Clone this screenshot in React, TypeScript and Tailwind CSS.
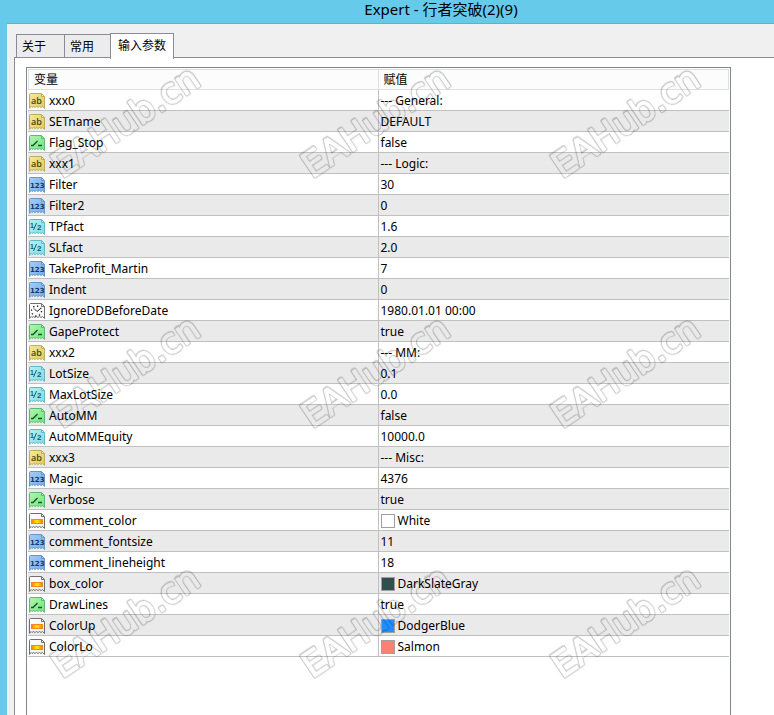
import { useState } from 'react';

type ParamType = 'string' | 'bool' | 'int' | 'double' | 'date' | 'color';

interface Param {
  name: string;
  type: ParamType;
  value: string;
  swatch?: string;
}

const params: Param[] = [
  { name: 'xxx0', type: 'string', value: '--- General:' },
  { name: 'SETname', type: 'string', value: 'DEFAULT' },
  { name: 'Flag_Stop', type: 'bool', value: 'false' },
  { name: 'xxx1', type: 'string', value: '--- Logic:' },
  { name: 'Filter', type: 'int', value: '30' },
  { name: 'Filter2', type: 'int', value: '0' },
  { name: 'TPfact', type: 'double', value: '1.6' },
  { name: 'SLfact', type: 'double', value: '2.0' },
  { name: 'TakeProfit_Martin', type: 'int', value: '7' },
  { name: 'Indent', type: 'int', value: '0' },
  { name: 'IgnoreDDBeforeDate', type: 'date', value: '1980.01.01 00:00' },
  { name: 'GapeProtect', type: 'bool', value: 'true' },
  { name: 'xxx2', type: 'string', value: '--- MM:' },
  { name: 'LotSize', type: 'double', value: '0.1' },
  { name: 'MaxLotSize', type: 'double', value: '0.0' },
  { name: 'AutoMM', type: 'bool', value: 'false' },
  { name: 'AutoMMEquity', type: 'double', value: '10000.0' },
  { name: 'xxx3', type: 'string', value: '--- Misc:' },
  { name: 'Magic', type: 'int', value: '4376' },
  { name: 'Verbose', type: 'bool', value: 'true' },
  { name: 'comment_color', type: 'color', value: 'White', swatch: 'bg-white' },
  { name: 'comment_fontsize', type: 'int', value: '11' },
  { name: 'comment_lineheight', type: 'int', value: '18' },
  { name: 'box_color', type: 'color', value: 'DarkSlateGray', swatch: 'bg-[#2f4f4f]' },
  { name: 'DrawLines', type: 'bool', value: 'true' },
  { name: 'ColorUp', type: 'color', value: 'DodgerBlue', swatch: 'bg-[#1e90ff]' },
  { name: 'ColorLo', type: 'color', value: 'Salmon', swatch: 'bg-[#fa8072]' },
];

const tabs = ['关于', '常用', '输入参数'];

const iconColors: Record<ParamType, { from: string; to: string; line: string; ink: string }> = {
  string: { from: '#f3ea9c', to: '#dccb62', line: '#bfae58', ink: '#4d4210' },
  bool: { from: '#b0f5b0', to: '#74e283', line: '#5cbc6e', ink: '#0f5a22' },
  int: { from: '#a4cdf5', to: '#72ace6', line: '#6496cf', ink: '#12386e' },
  double: { from: '#b5f2f4', to: '#7ddce6', line: '#62b8c6', ink: '#12606c' },
  date: { from: '#ffffff', to: '#f6f6f6', line: '#6f6f6f', ink: '#222222' },
  color: { from: '#ffffff', to: '#ececec', line: '#6f6f6f', ink: '#f08a1c' },
};

function TypeIcon({ type }: { type: ParamType }) {
  const c = iconColors[type];
  return (
    <svg width="16" height="16" viewBox="0 0 16 16" className="shrink-0" aria-hidden="true">
      <defs>
        <linearGradient id={`page-${type}`} x1="0" y1="0" x2="1" y2="1">
          <stop offset="0" stopColor={c.from} />
          <stop offset="1" stopColor={c.to} />
        </linearGradient>
        <linearGradient id="chip">
          <stop offset="0" stopColor="#ff7a00" />
          <stop offset="0.5" stopColor="#ffee00" />
          <stop offset="1" stopColor="#ff7a00" />
        </linearGradient>
      </defs>
      <path
        d="M.5 1.5Q.5.5 1.5.5H12L15.5 4V15.5L13.5 13.5L12 14.5L10.5 13.5L9 14.5L7.5 13.5L6 14.5L4.5 13.5L3 14.5L2 13.5L.5 15.5Z"
        fill={`url(#page-${type})`}
        stroke={c.line}
      />
      <path d="M12.5.5V3.5H15.5Z" fill={c.from} stroke={c.line} />
      {type === 'string' && (
        <text x="2" y="11" fontSize="9" fontWeight="600" fontFamily="Open Sans, sans-serif" fill={c.ink}>ab</text>
      )}
      {type === 'int' && (
        <text x="1" y="11" fontSize="7" fontWeight="bold" fontFamily="DejaVu Sans, sans-serif" fill={c.ink}>123</text>
      )}
      {type === 'double' && (
        <>
          <text x="1" y="9" fontSize="7" fontWeight="bold" fontFamily="Liberation Sans, sans-serif" fill={c.ink}>1</text>
          <path d="M4.5 11L7.5 4" stroke={c.ink} fill="none" />
          <text x="8" y="11" fontSize="8" fontWeight="bold" fontFamily="Liberation Sans, sans-serif" fill={c.ink}>2</text>
        </>
      )}
      {type === 'bool' && (
        <path d="M2 10.5H4L8.5 6M9 10.5H13" stroke={c.ink} strokeWidth="1.4" fill="none" />
      )}
      {type === 'date' && (
        <>
          <path d="M8 8.5L5 5.5M8 8.5L11 6" stroke={c.ink} fill="none" />
          <circle cx="7.5" cy="8" r="5" stroke={c.ink} strokeWidth="1.3" strokeDasharray="1.3 2.6" fill="none" />
        </>
      )}
      {type === 'color' && (
        <rect x="2.5" y="6.5" width="11" height="4" fill="url(#chip)" stroke={c.ink} />
      )}
    </svg>
  );
}

const markOrigins = [179, 429, 679].flatMap((y) => [62, 312, 562].map((x) => ({ x, y })));

function MarkText({ color, strokeWidth }: { color: string; strokeWidth: number }) {
  return markOrigins.map(({ x, y }) => (
    <text
      key={`${x}-${y}`}
      transform={`translate(${x} ${y}) rotate(-34)`}
      fontSize="35"
      fontFamily="DejaVu Sans, sans-serif"
      fill={color}
      stroke={color}
      strokeWidth={strokeWidth}
      strokeLinejoin="round"
    >
      EAHub.cn
    </text>
  ));
}

// Hollow letters: the text is drawn solid and its slightly thinner copy is cut out
function Watermark() {
  return (
    <svg className="absolute inset-0 h-full w-full pointer-events-none">
      <mask id="hollow" maskUnits="userSpaceOnUse" x="0" y="0" width="100%" height="100%">
        <rect width="100%" height="100%" fill="white" />
        <MarkText color="black" strokeWidth={1} />
      </mask>
      <g mask="url(#hollow)" opacity="0.25">
        <MarkText color="#202020" strokeWidth={3} />
      </g>
    </svg>
  );
}

export default function App() {
  const [active, setActive] = useState(2);

  return (
    <div className="relative flex min-h-screen flex-col overflow-hidden bg-[#66caea] font-['Noto_Sans','Noto_Sans_CJK_SC',sans-serif] text-xs text-black">
      <header className="h-[23px] pl-[108px] text-center">
        <h1 className="text-[15px] leading-[18px]">Expert - 行者突破(2)(9)</h1>
      </header>

      <main className="ml-[7px] flex grow flex-col border-t border-[#7ba7b8] bg-[#f0f0f0] pl-[7px] pt-[9px]">
        <div role="tablist" className="relative z-10 -mb-0.5 flex items-end pl-0.5">
          {tabs.map((tab, i) => (
            <button
              key={tab}
              role="tab"
              aria-selected={active === i}
              onClick={() => setActive(i)}
              className={
                active === i
                  ? 'h-[26px] border border-b-0 border-[#898c95] bg-white px-[7px] pb-0.5'
                  : 'mb-px h-[24px] border border-r-0 border-[#898c95] bg-[#ececec] pl-[5px] pr-4 pt-px first:pr-[18px]'
              }
            >
              {tab}
            </button>
          ))}
        </div>

        <section className="flex grow flex-col border-l border-t border-[#898c95] bg-white pl-[11px] pr-[43px] pt-[9px]">
          <div className="grow border border-b-0 border-[#828790] p-px">
            <table className="w-full table-fixed border-separate border-spacing-0 text-left">
              <thead>
                <tr className="h-[21px] bg-[#fcfcfc]">
                  <th className="w-1/2 border border-[#dfdfdf] py-0 pl-[5px] font-normal leading-[19px]">变量</th>
                  <th className="border border-l-0 border-[#dfdfdf] py-0 pl-[5px] font-normal leading-[19px]">赋值</th>
                </tr>
              </thead>
              <tbody>
                {params.map((p) => (
                  <tr key={p.name} className="h-[21px] even:bg-[#eaeaea]">
                    <td className="border-b border-r border-[#c0c0c0] py-0 pl-px">
                      <div className="flex h-5 items-center gap-1 pt-0.5">
                        <TypeIcon type={p.type} />
                        {p.name}
                      </div>
                    </td>
                    <td className="border-b border-[#c0c0c0] py-0 pl-0.5">
                      <div className="flex h-5 items-center gap-[3px] pt-0.5">
                        {p.swatch && <span className={`size-[14px] border border-[#a0a0a0] ${p.swatch}`} />}
                        {p.value}
                      </div>
                    </td>
                  </tr>
                ))}
              </tbody>
            </table>
          </div>
        </section>
      </main>

      <Watermark />
    </div>
  );
}
